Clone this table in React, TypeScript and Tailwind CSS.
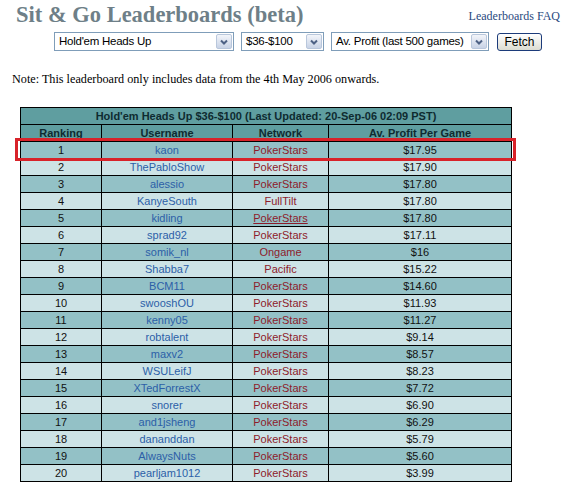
const rows: [number, string, string, string][] = [
  [1, 'kaon', 'PokerStars', '$17.95'],
  [2, 'ThePabloShow', 'PokerStars', '$17.90'],
  [3, 'alessio', 'PokerStars', '$17.80'],
  [4, 'KanyeSouth', 'FullTilt', '$17.80'],
  [5, 'kidling', 'PokerStars', '$17.80'],
  [6, 'sprad92', 'PokerStars', '$17.11'],
  [7, 'somik_nl', 'Ongame', '$16'],
  [8, 'Shabba7', 'Pacific', '$15.22'],
  [9, 'BCM11', 'PokerStars', '$14.60'],
  [10, 'swooshOU', 'PokerStars', '$11.93'],
  [11, 'kenny05', 'PokerStars', '$11.27'],
  [12, 'robtalent', 'PokerStars', '$9.14'],
  [13, 'maxv2', 'PokerStars', '$8.57'],
  [14, 'WSULeifJ', 'PokerStars', '$8.23'],
  [15, 'XTedForrestX', 'PokerStars', '$7.72'],
  [16, 'snorer', 'PokerStars', '$6.90'],
  [17, 'and1jsheng', 'PokerStars', '$6.29'],
  [18, 'dananddan', 'PokerStars', '$5.79'],
  [19, 'AlwaysNuts', 'PokerStars', '$5.60'],
  [20, 'pearljam1012', 'PokerStars', '$3.99'],
];

function Dropdown({ label, width }: { label: string; width: string }) {
  return (
    <div className={`flex items-center justify-between h-[19px] border border-[#7f9db9] bg-white pl-[4px] pr-[1px] ${width}`}>
      <span className="text-[11.5px] tracking-[-0.25px] text-black leading-none whitespace-nowrap">{label}</span>
      <span className="flex items-center justify-center w-[16px] h-[15px] rounded-[2px] border border-[#b9c7dc] bg-gradient-to-b from-[#f3f5fa] to-[#c8d3e6]">
        <svg width="8" height="6" viewBox="0 0 8 6">
          <path d="M1 1.5 L4 4.5 L7 1.5" fill="none" stroke="#4d6185" strokeWidth="2" />
        </svg>
      </span>
    </div>
  );
}

export default function App() {
  return (
    <div className="w-[585px] h-[493px] bg-white font-['Liberation_Sans',Arial,sans-serif] overflow-hidden">
      {/* Header */}
      <div className="flex justify-between items-start pl-[16px] pr-[25px] pt-[3px]">
        <h1 className="font-['Liberation_Serif',serif] font-bold text-[22.5px] leading-[24px] text-[#6e7f88]">
          Sit &amp; Go Leaderboards (beta)
        </h1>
        <a className="font-['Liberation_Serif',serif] text-[12px] leading-[14px] mt-[6px] text-[#2a4a80]">
          Leaderboards FAQ
        </a>
      </div>

      {/* Filters */}
      <div className="flex items-center gap-[7px] pl-[54px] mt-[5px]">
        <Dropdown label="Hold'em Heads Up" width="w-[180px]" />
        <Dropdown label="$36-$100" width="w-[83px]" />
        <Dropdown label="Av. Profit (last 500 games)" width="w-[158px]" />
        <button className="ml-[1px] h-[18px] w-[45px] rounded-[3px] border border-[#1c3b7a] bg-gradient-to-b from-white to-[#dcdcd2] text-[12px] leading-none text-black">
          Fetch
        </button>
      </div>

      <p className="font-['Liberation_Serif',serif] text-[12.2px] leading-[14px] text-black pl-[12px] mt-[21px]">
        Note: This leaderboard only includes data from the 4th May 2006 onwards.
      </p>

      {/* Table */}
      <div className="relative ml-[20px] mt-[21px] w-[491px]">
        <table className="w-[491px] border-collapse border border-black text-[11px] table-fixed">
          <colgroup>
            <col className="w-[81px]" />
            <col className="w-[131px]" />
            <col className="w-[96px]" />
            <col className="w-[183px]" />
          </colgroup>
          <thead>
            <tr className="bg-[#5f9ea0] h-[17px]">
              <th colSpan={4} className="border border-black font-bold text-[#0e2b30] leading-none p-0">
                Hold'em Heads Up $36-$100 (Last Updated: 20-Sep-06 02:09 PST)
              </th>
            </tr>
            <tr className="bg-[#5f9ea0] h-[17px]">
              <th className="border border-black font-bold text-[#0e2b30] leading-none p-0">Ranking</th>
              <th className="border border-black font-bold text-[#0e2b30] leading-none p-0">Username</th>
              <th className="border border-black font-bold text-[#0e2b30] leading-none p-0">Network</th>
              <th className="border border-black font-bold text-[#0e2b30] leading-none p-0">Av. Profit Per Game</th>
            </tr>
          </thead>
          <tbody>
            {rows.map(([rank, user, net, profit]) => (
              <tr key={rank} className={`h-[17px] ${rank % 2 === 1 ? 'bg-[#93c1c6]' : 'bg-[#cde3e6]'}`}>
                <td className="border border-black text-center text-[#111] leading-none p-0">{rank}</td>
                <td className="border border-black text-center text-[#2c5fa8] leading-none p-0">{user}</td>
                <td className={`border border-black text-center text-[#8e1b2b] leading-none p-0 ${rank === 5 ? 'underline' : ''}`}>{net}</td>
                <td className="border border-black text-center text-[#111] leading-none p-0">{profit}</td>
              </tr>
            ))}
          </tbody>
        </table>
        {/* highlight */}
        <div className="absolute left-[-5px] top-[31px] w-[501px] h-[23px] border-[3px] border-[#d8232a] pointer-events-none" />
      </div>
    </div>
  );
}
